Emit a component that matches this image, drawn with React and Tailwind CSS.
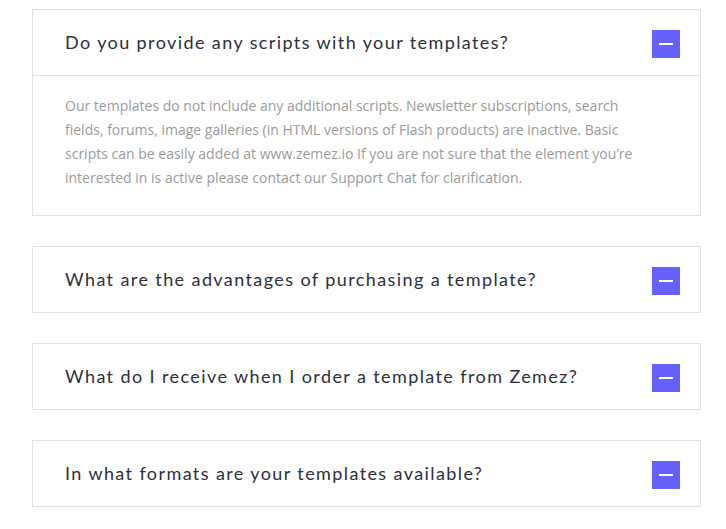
import React from "react";

const items = [
  {
    q: "Do you provide any scripts with your templates?",
    a: "Our templates do not include any additional scripts. Newsletter subscriptions, search fields, forums, image galleries (in HTML versions of Flash products) are inactive. Basic scripts can be easily added at www.zemez.io If you are not sure that the element you’re interested in is active please contact our Support Chat for clarification.",
    open: true,
  },
  { q: "What are the advantages of purchasing a template?" },
  { q: "What do I receive when I order a template from Zemez?" },
  { q: "In what formats are your templates available?" },
];

export default function App() {
  return (
    <div className="bg-white w-[726px] h-[529px] overflow-hidden pt-[9px] pl-[32px]">
      <div className="w-[669px] flex flex-col gap-[30px]">
        {items.map((it, i) => (
          <div key={i} className="border border-[#e1e1e1] bg-white">
            <div className="h-[65px] flex items-center justify-between pl-[32px] pr-[20px]">
              <span
                className="text-[18px] text-[#2c2f3b] tracking-[1.4px]"
                style={{ fontFamily: "Lato, 'Noto Sans', sans-serif" }}
              >
                {it.q}
              </span>
              <span className="w-[28px] h-[28px] bg-[#6461fc] flex items-center justify-center mt-[3px]">
                <span className="w-[14px] h-[2px] bg-white" />
              </span>
            </div>
            {it.open && (
              <div
                className="border-t border-[#e1e1e1] pl-[32px] pr-[40px] pt-[18px] pb-[25px] text-[14px] leading-[24px] text-[#9a9a9a]"
                style={{ fontFamily: "'Open Sans', sans-serif" }}
              >
                {it.a}
              </div>
            )}
          </div>
        ))}
      </div>
    </div>
  );
}
